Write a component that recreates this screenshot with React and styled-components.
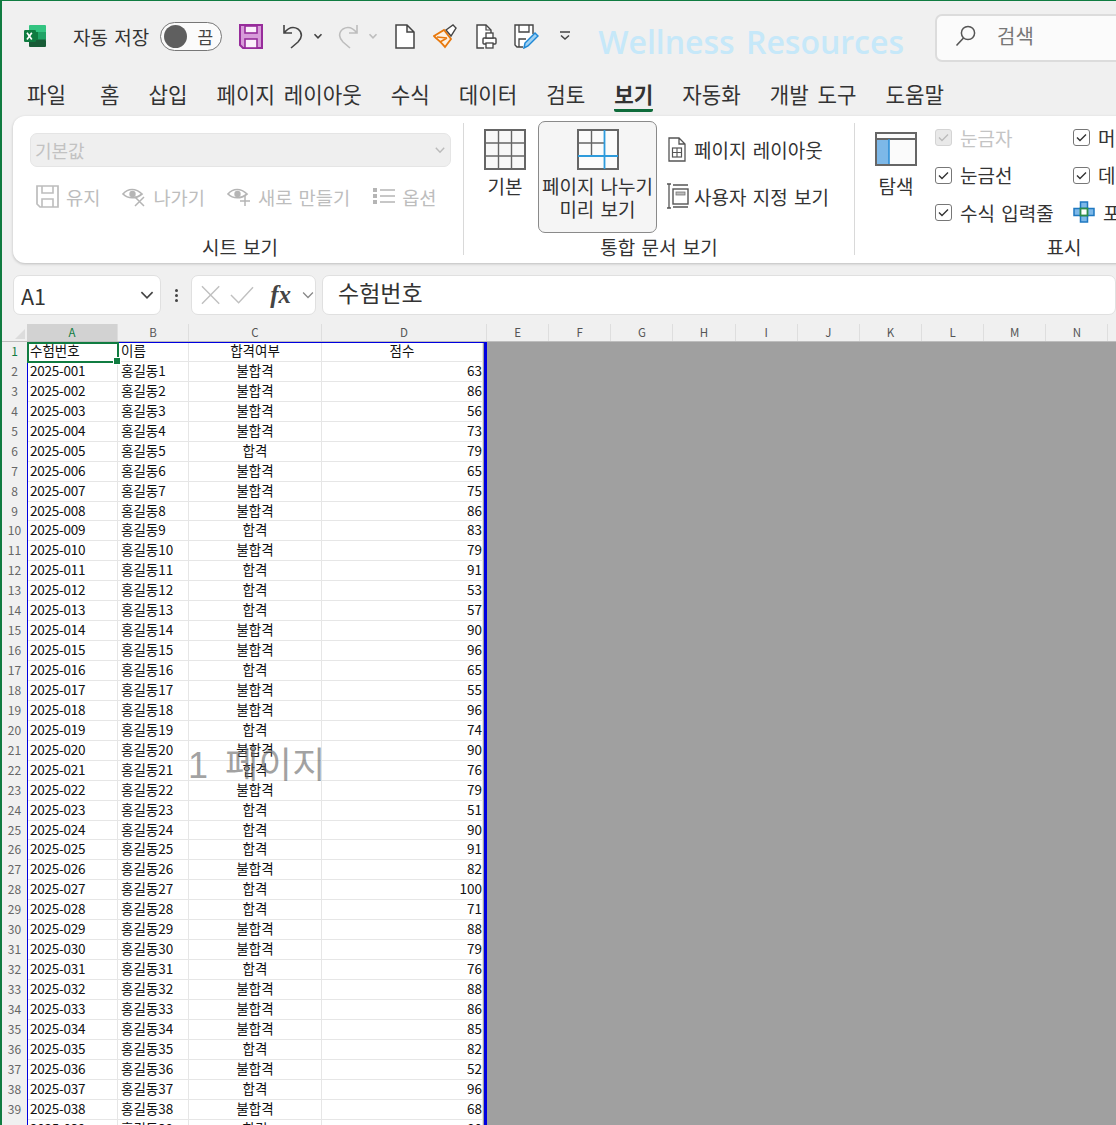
import React from 'react'
import styled, { createGlobalStyle } from 'styled-components'

const GlobalStyle = createGlobalStyle`
  html, body {
    margin: 0;
    padding: 0;
    background: #f0f0f0;
  }
  body {
    font-family: "Noto Sans CJK KR", "Noto Sans", sans-serif;
    word-spacing: 2px;
    color: #333;
  }
`

const Window = styled.div`
  width: 1116px;
  height: 1125px;
  box-sizing: border-box;
  overflow: hidden;
  background: #f0f0f0;
  border-top: 1px solid #107c41;
  border-left: 2px solid #107c41;
  display: flex;
  flex-direction: column;
`

const TitleBar = styled.div`
  flex: none;
  height: 70px;
  display: flex;
  align-items: center;
  padding-left: 21px;
  white-space: nowrap;
`

const TitleIcon = styled.svg`
  flex: none;
  margin-left: ${p => p.$gap || 0}px;
  transform: ${p => (p.$flip ? 'scaleX(-1)' : 'none')};
`

const AutoSave = styled.span`
  flex: none;
  margin-left: 26px;
  font-size: 19px;
  color: #333;
`

const Toggle = styled.div`
  flex: none;
  margin-left: 11px;
  width: 62px;
  height: 29px;
  box-sizing: border-box;
  border: 1.5px solid #777;
  border-radius: 15px;
  background: #fbfbfb;
  display: flex;
  align-items: center;
  justify-content: space-between;
  padding: 0 8px 0 3px;
  font-size: 17px;
  color: #444;
`

const Knob = styled.span`
  width: 23px;
  height: 23px;
  border-radius: 50%;
  background: #5f5f5f;
`

const Workbook = styled.span`
  flex: none;
  margin: 10px 0 0 27px;
  font-family: "Open Sans", sans-serif;
  font-size: 32px;
  font-weight: 600;
  word-spacing: 3px;
  color: #c6e8f9;
`

const SearchBox = styled.div`
  margin: 4px 0 0 31px;
  flex: none;
  width: 300px;
  height: 48px;
  box-sizing: border-box;
  border: 2px solid #dcdcdc;
  border-radius: 7px;
  background: #fbfbfb;
  display: flex;
  align-items: center;
  padding: 0 0 5px 18px;
  gap: 21px;
  font-size: 20px;
  color: #777;
`

const Tabs = styled.nav`
  flex: none;
  display: flex;
  gap: 29px;
  padding-left: 25px;
  margin-bottom: 4px;
`

const Tab = styled.div`
  height: 41px;
  box-sizing: border-box;
  margin-left: ${p => p.$offset || 0}px;
  padding-top: 8px;
  border-bottom: 3px solid ${p => (p.$active ? '#0e6b3a' : 'transparent')};
  border-radius: 0 0 2px 2px;
  font-size: 21.2px;
  word-spacing: 4px;
  line-height: 30px;
  font-weight: ${p => (p.$active ? 700 : 400)};
  color: #333;
  white-space: nowrap;
`

const Ribbon = styled.div`
  flex: none;
  width: 1250px;
  height: 147px;
  box-sizing: border-box;
  margin-left: 11px;
  padding: 5px 0 8px;
  background: #fff;
  border-radius: 12px;
  box-shadow: 0 1px 3px rgba(0, 0, 0, 0.22);
  display: flex;
`

const Group = styled.section`
  flex: none;
  width: ${p => p.$width}px;
  display: flex;
  flex-direction: column;
`

const GroupBody = styled.div`
  flex: 1;
  display: flex;
  min-height: 0;
`

const GroupLabel = styled.div`
  flex: none;
  height: 16px;
  padding-left: ${p => p.$inset || 0}px;
  line-height: 16px;
  font-size: 19px;
  text-align: center;
  color: #333;
  white-space: nowrap;
`

const Divider = styled.div`
  flex: none;
  width: 1px;
  margin: 2px 0 0;
  background: #d9d9d9;
`

const SheetViews = styled.div`
  flex: 1;
  padding: 12px 12px 0 17px;
`

const ViewSelect = styled.div`
  height: 34px;
  box-sizing: border-box;
  display: flex;
  align-items: center;
  justify-content: space-between;
  padding: 0 4px 1px;
  background: #efefef;
  border: 1px solid #e5e5e5;
  border-radius: 7px;
  font-size: 18px;
  color: #c2c2c2;
`

const ViewActions = styled.div`
  display: flex;
  gap: 22px;
  margin-top: 17px;
  padding-left: 6px;
`

const ViewAction = styled.div`
  display: flex;
  align-items: center;
  gap: 7px;
  height: 24px;
  font-size: 18.7px;
  color: #bdbdbd;
  white-space: nowrap;
`

const LargeButton = styled.div`
  flex: none;
  width: ${p => p.$width}px;
  height: 112px;
  box-sizing: border-box;
  margin-left: ${p => p.$gap || 0}px;
  padding-top: 7px;
  display: flex;
  flex-direction: column;
  align-items: center;
  font-size: 19px;
  line-height: 23px;
  text-align: center;
  white-space: nowrap;
  color: #333;
  border: 1px solid ${p => (p.$selected ? '#8a8a8a' : 'transparent')};
  border-radius: 7px;
  background: ${p => (p.$selected ? '#f5f5f5' : 'transparent')};

  svg {
    flex: none;
    margin-bottom: 4px;
  }
`

const SideButtons = styled.div`
  margin-left: 8px;
  padding-top: 16px;
  display: flex;
  flex-direction: column;
  gap: 23px;
`

const SideButton = styled.div`
  height: 24px;
  display: flex;
  align-items: center;
  gap: 5px;
  font-size: 19px;
  white-space: nowrap;
  color: #333;
`

const IconSlot = styled.span`
  flex: none;
  width: 24px;
  display: flex;
  justify-content: center;
`

const CheckColumn = styled.div`
  flex: none;
  width: ${p => p.$width}px;
  margin-left: ${p => p.$gap || 0}px;
  padding-top: 4px;
  display: flex;
  flex-direction: column;
  gap: 13.5px;
`

const CheckRow = styled.label`
  height: 24px;
  display: flex;
  align-items: center;
  gap: 8px;
  font-size: 19px;
  white-space: nowrap;
  color: ${p => (p.$disabled ? '#c4c4c4' : '#333')};
`

const CheckBox = styled.span`
  flex: none;
  width: 17px;
  height: 17px;
  margin-top: 1px;
  box-sizing: border-box;
  border: 1px solid ${p => (p.$disabled ? '#d4d4d4' : '#777')};
  border-radius: 3px;
  background: ${p => (p.$disabled ? '#e9e9e9' : '#fff')};
  display: flex;
  align-items: center;
  justify-content: center;
`

const FormulaBar = styled.div`
  flex: none;
  height: 40px;
  margin: 12px 0 9px;
  padding-left: 11px;
  display: flex;
  align-items: stretch;
`

const FieldBox = styled.div`
  flex: ${p => (p.$grow ? 1 : 'none')};
  width: ${p => (p.$width ? `${p.$width}px` : 'auto')};
  box-sizing: border-box;
  background: #fff;
  border: 1px solid #e0e0e0;
  border-radius: 7px;
  display: flex;
  align-items: center;
`

const NameBox = styled(FieldBox)`
  justify-content: space-between;
  padding: 0 5px 0 7px;
  font-size: 21.5px;
  color: #333;
`

const Dots = styled.div`
  width: 30px;
  display: flex;
  flex-direction: column;
  align-items: center;
  justify-content: center;
  gap: 2px;

  span {
    width: 3px;
    height: 3px;
    background: #444;
    border-radius: 50%;
  }
`

const FormulaButtons = styled(FieldBox)`
  padding-left: 9px;
  gap: 10px;
`

const FxLabel = styled.span`
  margin-left: 6px;
  font-family: "Liberation Serif", serif;
  font-size: 25px;
  font-style: italic;
  font-weight: 700;
  color: #444;
`

const FormulaInput = styled(FieldBox)`
  margin-left: 6px;
  padding: 0 0 6px 15px;
  font-size: 23px;
  color: #333;
`

const Sheet = styled.div`
  flex: 1;
  min-height: 0;
  position: relative;
  overflow: hidden;
`

const ColumnHeaders = styled.div`
  height: 17px;
  display: flex;
  border-bottom: 1px solid #bdbdbd;
  background: #f0f0f0;
`

const Corner = styled.div`
  flex: none;
  width: 25px;
  display: flex;
  align-items: flex-end;
  justify-content: flex-end;
  padding: 0 2px 2px 0;
  box-sizing: border-box;
`

const ColumnHeader = styled.div`
  flex: none;
  width: ${p => p.$width}px;
  box-sizing: border-box;
  border-right: 1px solid #dedede;
  font-size: 11.5px;
  line-height: 16px;
  text-align: center;
  color: ${p => (p.$active ? '#107c41' : '#555')};
  background: ${p => (p.$active ? '#d2d2d2' : 'transparent')};
`

const SheetBody = styled.div`
  display: flex;
`

const Table = styled.div`
  flex: none;
  display: grid;
  grid-template-columns: 25px 91px 71px 133px 161px;
  grid-auto-rows: 19.94px;
`

const RowHeader = styled.div`
  background: #f0f0f0;
  font-size: 12px;
  line-height: 17px;
  text-align: center;
  color: ${p => (p.$active ? '#107c41' : '#666')};
`

const Cell = styled.div`
  box-sizing: border-box;
  padding: 0 ${p => (p.$align === 'right' ? 0 : 3)}px 0 3px;
  white-space: nowrap;
  background: #fff;
  border-right: 1.5px solid #e6e6e6;
  border-bottom: 1.5px solid #e6e6e6;
  font-size: 13.5px;
  line-height: 17px;
  letter-spacing: ${p => (p.$tight ? '-0.25px' : '0')};
  color: #111;
  word-spacing: 0;
  text-align: ${p => p.$align || 'left'};
`

const OutsidePrintArea = styled.div`
  flex: 1;
  background: #a0a0a0;
`

const PrintArea = styled.div`
  position: absolute;
  top: 18px;
  left: 25px;
  bottom: 0;
  width: 460px;
  box-sizing: border-box;
  border-top: 1.5px solid #0000e0;
  border-left: 1.5px solid #0000e0;
  border-right: 3px solid #0000e0;
  pointer-events: none;
`

const Selection = styled.div`
  position: absolute;
  top: 18px;
  left: 25px;
  width: 92px;
  height: 21px;
  box-sizing: border-box;
  border: 2px solid #107c41;

  &::after {
    content: '';
    position: absolute;
    right: -4px;
    bottom: -4px;
    width: 6px;
    height: 6px;
    background: #107c41;
    border: 1px solid #fff;
  }
`

const PageWatermark = styled.div`
  position: absolute;
  top: 417px;
  left: 186px;
  font-family: "Liberation Sans", "Noto Sans CJK KR", sans-serif;
  font-size: 36px;
  line-height: 50px;
  letter-spacing: 0.5px;
  word-spacing: 6px;
  color: rgba(100, 100, 100, 0.6);
  white-space: nowrap;
  pointer-events: none;
`

const ExcelLogo = () => (
  <TitleIcon width="24" height="24" viewBox="0 0 24 24">
    <rect x="6" y="1" width="17" height="7.5" rx="1" fill="#33c481" />
    <rect x="6" y="8" width="17" height="8" fill="#21a366" />
    <rect x="6" y="15.5" width="17" height="7.5" rx="1" fill="#185c37" />
    <rect x="6" y="8" width="9" height="8" fill="#107c41" />
    <rect x="1" y="6" width="12" height="12" rx="1.2" fill="#107c41" />
    <path d="M4 8.8l4.8 6.6M8.8 8.8L4 15.4" stroke="#fff" strokeWidth="1.7" fill="none" />
  </TitleIcon>
)

const SaveIcon = ({ gap }) => (
  <TitleIcon $gap={gap} width="24" height="25" viewBox="0 0 24 25">
    <path d="M1 1h22v23H4l-3-3z" fill="#d79bd9" stroke="#972c9b" strokeWidth="2" />
    <rect x="6" y="2" width="12" height="7" fill="#fbeffb" stroke="#972c9b" strokeWidth="1.6" />
    <rect x="6" y="15" width="12" height="9" fill="#fbeffb" stroke="#972c9b" strokeWidth="1.6" />
  </TitleIcon>
)

const UndoIcon = ({ gap, color, flip }) => (
  <TitleIcon $gap={gap} $flip={flip} width="23" height="26" viewBox="0 0 23 26">
    <path d="M3 2v8h8M3 10c4-5 9-7 14-4 5 4 4 9 0 13l-7 6" fill="none" stroke={color} strokeWidth="1.6" />
  </TitleIcon>
)

const Chevron = ({ gap, color = '#444', size = 10, weight = 1.6 }) => (
  <TitleIcon $gap={gap} width={size} height={size} viewBox="0 0 10 10">
    <path d="M1.5 3.2L5 6.8l3.5-3.6" fill="none" stroke={color} strokeWidth={weight} />
  </TitleIcon>
)

const NewFileIcon = ({ gap }) => (
  <TitleIcon $gap={gap} width="20" height="25" viewBox="0 0 20 25">
    <path d="M1 1h11l7 7v16H1zM12 1v7h7" fill="#fff" stroke="#444" strokeWidth="1.5" />
  </TitleIcon>
)

const BrushIcon = ({ gap }) => (
  <TitleIcon $gap={gap} width="25" height="25" viewBox="0 0 25 25">
    <path d="M1 12l10-6 7 9-6 8c-3-4-7-7-11-11z" fill="#fdf1e2" stroke="#e8780c" strokeWidth="1.8" />
    <path d="M4 13l10 1M7 18l7-4" stroke="#e8780c" strokeWidth="1.5" />
    <path d="M13 6l7-5 3 3-5 8z" fill="#fff" stroke="#444" strokeWidth="1.4" />
  </TitleIcon>
)

const PrintPreviewIcon = ({ gap }) => (
  <TitleIcon $gap={gap} width="21" height="25" viewBox="0 0 21 25">
    <path d="M8 24H1V1h9l5 5v5" fill="#fff" stroke="#444" strokeWidth="1.4" />
    <path d="M10 1v5h5" fill="none" stroke="#444" strokeWidth="1.2" />
    <rect x="7" y="14" width="13" height="6" rx="1" fill="#fff" stroke="#444" strokeWidth="1.4" />
    <rect x="10" y="9" width="7" height="5" fill="#fff" stroke="#444" strokeWidth="1.3" />
    <rect x="10" y="19" width="7" height="5" fill="#fff" stroke="#444" strokeWidth="1.3" />
  </TitleIcon>
)

const SavePencilIcon = ({ gap }) => (
  <TitleIcon $gap={gap} width="25" height="25" viewBox="0 0 25 25">
    <path d="M9 23H3l-2-2V1h18v9" fill="#fff" stroke="#444" strokeWidth="1.4" />
    <path d="M5 1v7h10V1M5 23v-8h7" fill="none" stroke="#444" strokeWidth="1.3" />
    <path d="M10 24l1-5 10-10 3 3-10 10z" fill="#9fd0f2" stroke="#1f88d6" strokeWidth="1.5" />
  </TitleIcon>
)

const CustomizeIcon = ({ gap }) => (
  <TitleIcon $gap={gap} width="12" height="10" viewBox="0 0 12 10">
    <path d="M1 1h10M2 4.5L6 8l4-3.5" fill="none" stroke="#444" strokeWidth="1.5" />
  </TitleIcon>
)

const SearchIcon = () => (
  <svg width="21" height="22" viewBox="0 0 21 22">
    <circle cx="13" cy="8" r="6.6" fill="none" stroke="#555" strokeWidth="1.5" />
    <path d="M8.5 13L1.5 20.5" stroke="#555" strokeWidth="1.6" />
  </svg>
)

const KeepIcon = () => (
  <svg width="23" height="23" viewBox="0 0 23 23">
    <path d="M1 1h21v21H4l-3-3z" fill="#fff" stroke="#bdbdbd" strokeWidth="1.7" />
    <path d="M6 1v7h11V1M6 22v-8h11v8" fill="none" stroke="#bdbdbd" strokeWidth="1.6" />
  </svg>
)

const EyeIcon = ({ mark }) => (
  <svg width="24" height="22" viewBox="0 0 24 22">
    <path d="M1 9c5-6 13-6 19 0-6 5-14 5-19 0z" fill="none" stroke="#b5b5b5" strokeWidth="1.7" />
    <circle cx="10.5" cy="9" r="3.2" fill="#b5b5b5" />
    {mark === 'close' ? (
      <path d="M13 12l9 9M22 12l-9 9" stroke="#b5b5b5" strokeWidth="1.5" />
    ) : (
      <path d="M18 11v10M13 16h10" stroke="#b5b5b5" strokeWidth="1.5" />
    )}
  </svg>
)

const OptionsIcon = () => (
  <svg width="23" height="20" viewBox="0 0 23 20">
    <rect x="1" y="2" width="4" height="4" fill="#b5b5b5" />
    <rect x="1" y="8" width="4" height="4" fill="#b5b5b5" />
    <rect x="1" y="14" width="4" height="4" fill="#b5b5b5" />
    <path d="M8 4h15M8 10h15M8 16h15" stroke="#b5b5b5" strokeWidth="1.6" />
  </svg>
)

const NormalViewIcon = () => (
  <svg width="42" height="41" viewBox="0 0 42 41">
    <rect x="1" y="1" width="40" height="39" fill="#f8f8f8" stroke="#666" strokeWidth="2" />
    <path d="M14.5 1v39M27.5 1v39M1 14h40M1 27h40" stroke="#666" strokeWidth="1.4" />
  </svg>
)

const PageBreakIcon = () => (
  <svg width="42" height="41" viewBox="0 0 42 41">
    <rect x="1" y="1" width="40" height="39" fill="#fbfbfb" stroke="#666" strokeWidth="2" />
    <path d="M14.5 1v26M1 14h27" stroke="#666" strokeWidth="1.4" />
    <path d="M27.5 1v39M1 27h40" stroke="#2e9bdc" strokeWidth="1.8" />
  </svg>
)

const PageLayoutIcon = () => (
  <svg width="18" height="25" viewBox="0 0 18 25">
    <path d="M1 1h10l6 6v17H1zM11 1v6h6" fill="#fff" stroke="#555" strokeWidth="1.3" />
    <rect x="4.5" y="11" width="9" height="9" fill="#fff" stroke="#555" strokeWidth="1.2" />
    <path d="M9 11v9M4.5 15.500h9" stroke="#555" strokeWidth="1.1" />
  </svg>
)

const CustomViewIcon = () => (
  <svg width="24" height="26" viewBox="0 0 24 26">
    <path d="M2 1h4M4 1v24M2 25h4" fill="none" stroke="#555" strokeWidth="1.3" />
    <path d="M8 2h15M8 24h15" stroke="#555" strokeWidth="1.5" />
    <rect x="8" y="6" width="15" height="15" fill="#fff" stroke="#555" strokeWidth="1.4" />
    <rect x="11" y="9" width="9" height="3" fill="#bbb" stroke="#777" strokeWidth="0.8" />
  </svg>
)

const NavigationIcon = () => (
  <svg width="42" height="41" viewBox="0 0 42 41">
    <rect x="1" y="4" width="40" height="32" fill="#fbfbfb" stroke="#666" strokeWidth="2" />
    <rect x="2" y="10" width="12" height="25" fill="#7db8e8" />
    <path d="M1 10h40" stroke="#666" strokeWidth="1.8" />
    <path d="M14 10v25" stroke="#2e8fd6" strokeWidth="1.6" />
  </svg>
)

const FocusCellIcon = () => (
  <svg width="22" height="22" viewBox="0 0 22 22">
    <rect x="7.500" y="1" width="7" height="20" fill="#7db8e8" stroke="#1f78c1" strokeWidth="1.5" />
    <rect x="1" y="7.500" width="20" height="7" fill="#7db8e8" stroke="#1f78c1" strokeWidth="1.5" />
    <rect x="7.500" y="7.500" width="7" height="7" fill="#fff" stroke="#2c8c4a" strokeWidth="1.8" />
  </svg>
)

const CheckMark = ({ color = '#333' }) => (
  <svg width="11" height="9" viewBox="0 0 11 9">
    <path d="M1 4.500L4 7.500 10 1.500" fill="none" stroke={color} strokeWidth="1.4" />
  </svg>
)

const Check = ({ label, disabled }) => (
  <CheckRow $disabled={disabled}>
    <CheckBox $disabled={disabled}>
      <CheckMark color={disabled ? '#bbb' : '#333'} />
    </CheckBox>
    {label}
  </CheckRow>
)

const tabs = ['파일', '홈', '삽입', '페이지 레이아웃', '수식', '데이터', '검토', '보기', '자동화', '개발 도구', '도움말']

const columns = [
  ['A', 91], ['B', 71], ['C', 133], ['D', 165], ['E', 62.15], ['F', 62.15], ['G', 62.15], ['H', 62.15],
  ['I', 62.15], ['J', 62.15], ['K', 62.15], ['L', 62.15], ['M', 62.15], ['N', 62.15], ['O', 62.15],
]

// [결과, 점수] 2025-001 부터 순서대로
const scores = [
  ['불합격', 63], ['불합격', 86], ['불합격', 56], ['불합격', 73], ['합격', 79], ['불합격', 65],
  ['불합격', 75], ['불합격', 86], ['합격', 83], ['불합격', 79], ['합격', 91], ['합격', 53],
  ['합격', 57], ['불합격', 90], ['불합격', 96], ['합격', 65], ['불합격', 55], ['불합격', 96],
  ['합격', 74], ['불합격', 90], ['합격', 76], ['불합격', 79], ['합격', 51], ['합격', 90],
  ['합격', 91], ['불합격', 82], ['합격', 100], ['합격', 71], ['불합격', 88], ['불합격', 79],
  ['합격', 76], ['불합격', 88], ['불합격', 86], ['불합격', 85], ['합격', 82], ['불합격', 52],
  ['합격', 96], ['불합격', 68], ['합격', 80],
]

export default function App() {
  return (
    <Window>
      <GlobalStyle />
      <TitleBar>
        <ExcelLogo />
        <AutoSave>자동 저장</AutoSave>
        <Toggle>
          <Knob />끔
        </Toggle>
        <SaveIcon gap={17} />
        <UndoIcon gap={18} color="#444" />
        <Chevron gap={9} />
        <UndoIcon gap={14} color="#bdbdbd" flip />
        <Chevron gap={8} color="#bdbdbd" />
        <NewFileIcon gap={17} />
        <BrushIcon gap={18} />
        <PrintPreviewIcon gap={18} />
        <SavePencilIcon gap={17} />
        <CustomizeIcon gap={20} />
        <Workbook>Wellness Resources</Workbook>
        <SearchBox>
          <SearchIcon />
          검색
        </SearchBox>
      </TitleBar>

      <Tabs>
        {tabs.map(t => (
          <Tab key={t} $active={t === '보기'} $offset={t === '홈' ? 5 : 0}>{t}</Tab>
        ))}
      </Tabs>

      <Ribbon>
        <Group $width={450}>
          <GroupBody>
            <SheetViews>
              <ViewSelect>
                기본값
                <Chevron color="#bbb" size={12} weight={1.2} />
              </ViewSelect>
              <ViewActions>
                <ViewAction><KeepIcon />유지</ViewAction>
                <ViewAction><EyeIcon mark="close" />나가기</ViewAction>
                <ViewAction><EyeIcon mark="plus" />새로 만들기</ViewAction>
                <ViewAction><OptionsIcon />옵션</ViewAction>
              </ViewActions>
            </SheetViews>
          </GroupBody>
          <GroupLabel $inset={4}>시트 보기</GroupLabel>
        </Group>
        <Divider />
        <Group $width={390}>
          <GroupBody>
            <LargeButton $width={66} $gap={8}>
              <NormalViewIcon />
              기본
            </LargeButton>
            <LargeButton $width={119} $selected>
              <PageBreakIcon />
              페이지 나누기
              <br />
              미리 보기
            </LargeButton>
            <SideButtons>
              <SideButton><IconSlot><PageLayoutIcon /></IconSlot>페이지 레이아웃</SideButton>
              <SideButton><IconSlot><CustomViewIcon /></IconSlot>사용자 지정 보기</SideButton>
            </SideButtons>
          </GroupBody>
          <GroupLabel>통합 문서 보기</GroupLabel>
        </Group>
        <Divider />
        <Group $width={418}>
          <GroupBody>
            <LargeButton $width={66} $gap={8}>
              <NavigationIcon />
              탐색
            </LargeButton>
            <CheckColumn $width={138} $gap={6}>
              <Check label="눈금자" disabled />
              <Check label="눈금선" />
              <Check label="수식 입력줄" />
            </CheckColumn>
            <CheckColumn $width={180}>
              <Check label="머리글" />
              <Check label="데이터" />
              <CheckRow><FocusCellIcon />포커스 셀</CheckRow>
            </CheckColumn>
          </GroupBody>
          <GroupLabel>표시</GroupLabel>
        </Group>
      </Ribbon>

      <FormulaBar>
        <NameBox $width={148}>
          A1
          <Chevron size={16} weight={1} />
        </NameBox>
        <Dots><span /><span /><span /></Dots>
        <FormulaButtons $width={125}>
          <svg width="20" height="20" viewBox="0 0 20 20">
            <path d="M1 1l18 18M19 1L1 19" stroke="#c0c0c0" strokeWidth="1.5" />
          </svg>
          <svg width="25" height="20" viewBox="0 0 25 20">
            <path d="M1 10l8 8L24 2" fill="none" stroke="#c0c0c0" strokeWidth="1.5" />
          </svg>
          <FxLabel>fx</FxLabel>
          <Chevron size={14} color="#888" weight={0.9} />
        </FormulaButtons>
        <FormulaInput $grow>수험번호</FormulaInput>
      </FormulaBar>

      <Sheet>
        <ColumnHeaders>
          <Corner>
            <svg width="10" height="10" viewBox="0 0 10 10">
              <path d="M10 0v10H0z" fill="#dcdcdc" />
            </svg>
          </Corner>
          {columns.map(([name, width]) => (
            <ColumnHeader key={name} $width={width} $active={name === 'A'}>{name}</ColumnHeader>
          ))}
        </ColumnHeaders>
        <SheetBody>
          <Table>
            <RowHeader $active>1</RowHeader>
            <Cell>수험번호</Cell>
            <Cell>이름</Cell>
            <Cell $align="center">합격여부</Cell>
            <Cell $align="center">점수</Cell>
            {scores.map(([result, score], i) => (
              <React.Fragment key={i}>
                <RowHeader>{i + 2}</RowHeader>
                <Cell $tight>{`2025-${String(i + 1).padStart(3, '0')}`}</Cell>
                <Cell>{`홍길동${i + 1}`}</Cell>
                <Cell $align="center">{result}</Cell>
                <Cell $align="right">{score}</Cell>
              </React.Fragment>
            ))}
          </Table>
          <OutsidePrintArea />
        </SheetBody>
        <PrintArea />
        <Selection />
        <PageWatermark>1 페이지</PageWatermark>
      </Sheet>
    </Window>
  )
}
